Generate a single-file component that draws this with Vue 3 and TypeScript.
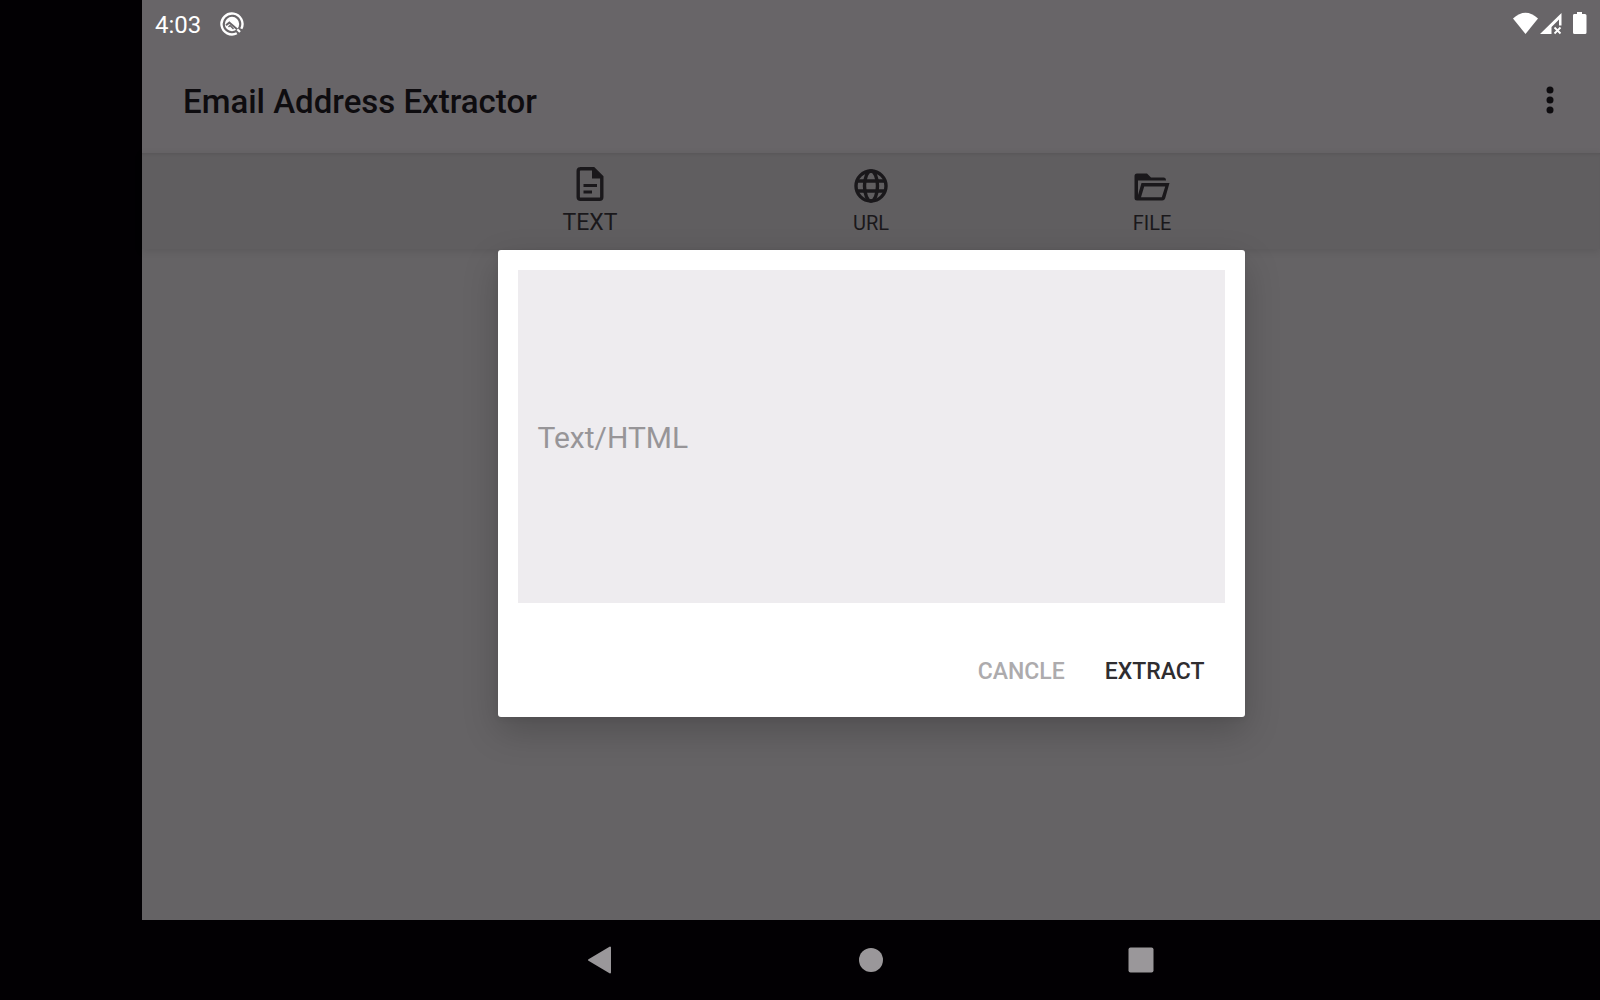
<script setup lang="ts">
import { ref } from 'vue'

type TabId = 'text' | 'url' | 'file'

const tabs: { id: TabId; label: string }[] = [
  { id: 'text', label: 'TEXT' },
  { id: 'url', label: 'URL' },
  { id: 'file', label: 'FILE' },
]

const active = ref<TabId>('text')
const source = ref('')
</script>

<template>
  <div class="device">
    <div class="cutout"></div>
    <div class="screen">
      <header class="status">
        <time>4:03</time>
        <svg class="notice" width="24" height="24" viewBox="0 0 24 24">
          <path d="M16.800 21.300A10.500 10.500 0 1 1 21.300 16.800" fill="none" stroke="#fff" stroke-width="2.400" />
          <circle cx="12" cy="12" r="7.200" fill="#fff" />
          <path d="M6 13.200L9.300 10.600L18.500 18.500" fill="none" stroke="#686568" stroke-width="2" />
          <path d="M8.500 15L10 13.500L13.500 17" fill="none" stroke="#686568" stroke-width="1.400" />
          <path d="M17.300 17.300L20 20" stroke="#fff" stroke-width="2.200" />
        </svg>
        <span class="spacer"></span>
        <svg width="76" height="24" viewBox="0 0 76 24">
          <path d="M0 6.500Q12.500-5 25 6.500L12.500 22Z" fill="#fff" />
          <path d="M27 22L48.500 1V13.500H46V7.500L38.500 15V22Z" fill="#fff" />
          <path d="M41.500 15.500L47.500 21.500M47.500 15.500L41.500 21.500" stroke="#fff" stroke-width="1.800" />
          <path d="M61 2H64V0H69V2H72Q73.500 2 73.500 3.500V20.500Q73.500 22 72 22H61.500Q60 22 60 20.500V3.500Q60 2 61 2Z" fill="#fff" />
        </svg>
      </header>

      <div class="app">
        <div class="toolbar">
          <h1>Email Address Extractor</h1>
          <button class="more" type="button" aria-label="More options">
            <svg width="8" height="28" viewBox="0 0 8 28" fill="#0e0c0f">
              <circle cx="4" cy="4" r="3.500" />
              <circle cx="4" cy="14" r="3.500" />
              <circle cx="4" cy="24" r="3.500" />
            </svg>
          </button>
        </div>

        <nav class="tabs">
          <button
            v-for="tab in tabs"
            :key="tab.id"
            type="button"
            class="tab"
            :class="{ active: tab.id === active }"
            @click="active = tab.id"
          >
            <svg v-if="tab.id === 'text'" width="28" height="36" viewBox="0 0 28 36">
              <path d="M4 1.700H17.500L25.800 10V30Q25.800 32.300 23.500 32.300H4.500Q2.200 32.300 2.200 30V4Q2.200 1.700 4.500 1.700Z" fill="none" stroke="#1a181b" stroke-width="3.400" />
              <path d="M16 2V11.500H26Z" fill="#1a181b" />
              <path d="M7.500 18.500H21M7.500 25H16" stroke="#1a181b" stroke-width="3" />
            </svg>
            <svg v-else-if="tab.id === 'url'" width="34" height="34" viewBox="0 0 34 34" fill="none" stroke="#1a181b" stroke-width="3.400">
              <circle cx="17" cy="17" r="15" />
              <ellipse cx="17" cy="17" rx="6.500" ry="15" />
              <path d="M3.500 12H30.500M3.500 22H30.500" />
            </svg>
            <svg v-else width="36" height="30" viewBox="0 0 36 30">
              <path d="M3 27.500Q.5 27.500 .5 25V3Q.5 .5 3 .5H13L17 4.500H29.500Q32 4.500 32 7.500H4V22L7.500 10H35.500L31.200 25.300Q30.500 27.500 28.200 27.500ZM7 24.200H27.800L31.200 13.400H10.200Z" fill="#1a181b" fill-rule="evenodd" />
            </svg>
            <span>{{ tab.label }}</span>
          </button>
        </nav>

        <main class="content"></main>

        <div class="overlay">
          <form class="dialog" role="dialog" aria-label="Extract from text" @submit.prevent>
            <textarea v-model="source" aria-label="Text/HTML" placeholder="Text/HTML"></textarea>
            <div class="actions">
              <button class="cancel" type="button">CANCLE</button>
              <button class="extract" type="submit">EXTRACT</button>
            </div>
          </form>
        </div>
      </div>

      <footer class="system">
        <button type="button" aria-label="Back">
          <svg width="28" height="28" viewBox="0 0 28 28">
            <path d="M2 14L23 1.500V26.500Z" fill="#9a979a" stroke="#9a979a" stroke-width="2" stroke-linejoin="round" />
          </svg>
        </button>
        <button type="button" aria-label="Home">
          <svg width="26" height="26" viewBox="0 0 26 26">
            <circle cx="13" cy="13" r="12" fill="#9a979a" />
          </svg>
        </button>
        <button type="button" aria-label="Recent apps">
          <svg width="26" height="26" viewBox="0 0 26 26">
            <rect x="0.500" y="0.500" width="25" height="25" rx="2" fill="#9a979a" />
          </svg>
        </button>
      </footer>
    </div>
  </div>
</template>

<style>
body {
  margin: 0;
  background: #020003;
}
</style>

<style scoped>
.device {
  display: flex;
  min-height: 100vh;
  background: #020003;
  font-family: Roboto, "Liberation Sans", sans-serif;
}

.cutout {
  flex: 0 0 142px;
}

.screen {
  flex: 1;
  min-width: 0;
  display: flex;
  flex-direction: column;
  background: #656365;
}

button {
  border: 0;
  padding: 0;
  margin: 0;
  background: none;
  font: inherit;
  color: inherit;
}

svg {
  display: block;
}

.status {
  display: flex;
  align-items: center;
  height: 47px;
  padding: 0 11px 0 13px;
  background: #686568;
  color: #fff;
  font-size: 24px;
}

.status time {
  padding-top: 2px;
}

.notice {
  margin-left: 19px;
}

.spacer {
  flex: 1;
}

.app {
  position: relative;
  flex: 1;
  display: flex;
  flex-direction: column;
}

.toolbar {
  display: flex;
  align-items: center;
  justify-content: space-between;
  height: 106px;
  padding: 0 46px 0 41px;
  background: #686568;
}

h1 {
  margin: 0;
  padding-top: 4px;
  font-size: 33px;
  line-height: 40px;
  font-weight: 500;
  color: #0e0c0f;
}

.tabs {
  display: flex;
  justify-content: center;
  height: 96px;
  background: #605e60;
  box-shadow: 0 2px 8px rgba(0, 0, 0, 0.1), inset 0 3px 3px -2px rgba(0, 0, 0, 0.1);
}

.tab {
  flex: 0 1 281px;
  display: flex;
  flex-direction: column;
  align-items: center;
  justify-content: flex-end;
  gap: 8px;
  padding-bottom: 14px;
  color: #1a181b;
  font-size: 20px;
  line-height: 24px;
}

.tab.active {
  font-size: 23px;
}

.content {
  flex: 1;
}

.overlay {
  position: absolute;
  inset: 0;
  display: flex;
  align-items: center;
  justify-content: center;
}

.dialog {
  box-sizing: border-box;
  width: 747px;
  max-width: 100%;
  padding: 20px 20px 16px;
  border-radius: 3px;
  background: #fff;
  box-shadow: 0 14px 36px rgba(0, 0, 0, 0.2), 0 2px 6px rgba(0, 0, 0, 0.06);
}

textarea {
  display: block;
  box-sizing: border-box;
  width: 100%;
  height: 333px;
  padding: 150px 20px;
  border: 0;
  border-radius: 0;
  outline: 0;
  resize: none;
  background: #eeecef;
  color: #2d2b2e;
  font: 30px/36px Roboto, "Liberation Sans", sans-serif;
}

textarea::placeholder {
  color: #979598;
  opacity: 1;
}

.actions {
  display: flex;
  justify-content: flex-end;
  gap: 40px;
  padding: 38px 20px 0;
}

.actions button {
  height: 60px;
  font-size: 23px;
  font-weight: 500;
}

.cancel {
  color: #adabad;
}

.extract {
  color: #2f2d30;
}

.system {
  display: flex;
  align-items: center;
  justify-content: center;
  height: 80px;
  background: #020003;
}

.system button {
  flex: 0 1 270px;
  display: flex;
  justify-content: center;
}
</style>
